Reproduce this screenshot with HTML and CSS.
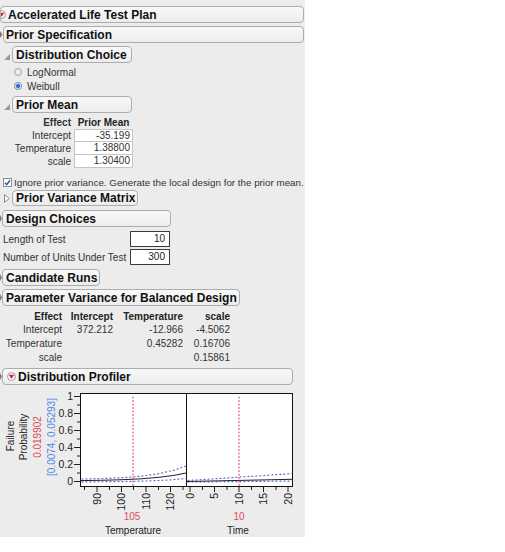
FILE: index.html
```html
<!DOCTYPE html>
<html>
<head>
<meta charset="utf-8">
<title>Accelerated Life Test Plan</title>
<link rel="stylesheet" href="styles.css">
</head>
<body>
<div class="panel">
  <div class="row first">
    <div class="box w-top">
      <svg class="hot cut" width="9" height="9" viewBox="0 0 9 9"><circle cx="4.5" cy="4.5" r="4" fill="#fafafa" stroke="#a0a0a0"/><path d="M1.6 2.8 L7.4 2.8 L4.5 6.8 Z" fill="#d7263a"/></svg>
      <span>Accelerated Life Test Plan</span>
    </div>
  </div>
  <div class="row">
    <svg class="sliver" width="3" height="17" viewBox="0 0 3 17"><path d="M0 5 L2.5 8.5 L0 12 Z" fill="#7a7a7a"/></svg>
    <div class="box w-prior"><span>Prior Specification</span></div>
  </div>
  <div class="row">
    <span class="tri"><svg width="6" height="6" viewBox="0 0 6 6"><path d="M6 0 L6 6 L0 6 Z" fill="#9a9a9a"/></svg></span>
    <div class="box w-dist"><span>Distribution Choice</span></div>
  </div>
  <div class="opt first-opt"><span class="radio"></span>LogNormal</div>
  <div class="opt"><span class="radio on"></span>Weibull</div>
  <div class="row">
    <span class="tri"><svg width="6" height="6" viewBox="0 0 6 6"><path d="M6 0 L6 6 L0 6 Z" fill="#9a9a9a"/></svg></span>
    <div class="box w-mean"><span>Prior Mean</span></div>
  </div>
  <div class="pm">
    <div class="pm-h lbl">Effect</div><div class="pm-h ctr">Prior Mean</div>
    <div class="lbl">Intercept</div><div class="val">-35.199</div>
    <div class="lbl">Temperature</div><div class="val">1.38800</div>
    <div class="lbl">scale</div><div class="val">1.30400</div>
  </div>
  <div class="check-row">
    <svg class="check" width="9" height="9" viewBox="0 0 9 9"><rect x="0.5" y="0.5" width="8" height="8" fill="#fdfdfd" stroke="#8e8e8e"/><path d="M2 4.8 L3.7 6.6 L7 2.2" fill="none" stroke="#2b56b8" stroke-width="1.5"/></svg>
    <span>Ignore prior variance. Generate the local design for the prior mean.</span>
  </div>
  <div class="row pvm">
    <span class="tri closed"><svg width="6" height="9" viewBox="0 0 6 9"><path d="M0.5 0.7 L5.3 4.5 L0.5 8.3 Z" fill="#ffffff" stroke="#8a8a8a"/></svg></span>
    <div class="box w-pvm"><span>Prior Variance Matrix</span></div>
  </div>
  <div class="row design">
    <svg class="sliver" width="2" height="17" viewBox="0 0 2 17"><path d="M0 5 L2 8.5 L0 12 Z" fill="#7a7a7a"/></svg>
    <div class="box w-design"><span>Design Choices</span></div>
  </div>
  <div class="fields">
    <div class="field"><span class="flabel">Length of Test</span><span class="input">10</span></div>
    <div class="field"><span class="flabel">Number of Units Under Test</span><span class="input">300</span></div>
  </div>
  <div class="row">
    <svg class="sliver" width="2" height="17" viewBox="0 0 2 17"><path d="M0 5 L2 8.5 L0 12 Z" fill="#7a7a7a"/></svg>
    <div class="box w-cand"><span>Candidate Runs</span></div>
  </div>
  <div class="row">
    <svg class="sliver" width="2" height="17" viewBox="0 0 2 17"><path d="M0 5 L2 8.5 L0 12 Z" fill="#7a7a7a"/></svg>
    <div class="box w-param"><span>Parameter Variance for Balanced Design</span></div>
  </div>
  <div class="pv">
    <div class="pv-h">Effect</div><div class="pv-h">Intercept</div><div class="pv-h">Temperature</div><div class="pv-h">scale</div>
    <div>Intercept</div><div>372.212</div><div>-12.966</div><div>-4.5062</div>
    <div>Temperature</div><div></div><div>0.45282</div><div>0.16706</div>
    <div>scale</div><div></div><div></div><div>0.15861</div>
  </div>
  <div class="row prof">
    <svg class="sliver" width="2" height="17" viewBox="0 0 2 17"><path d="M0 5 L2 8.5 L0 12 Z" fill="#7a7a7a"/></svg>
    <div class="box w-prof">
      <svg class="hot" width="9" height="9" viewBox="0 0 9 9"><circle cx="4.5" cy="4.5" r="4" fill="#fafafa" stroke="#a0a0a0"/><path d="M1.6 2.8 L7.4 2.8 L4.5 6.8 Z" fill="#d7263a"/></svg>
      <span>Distribution Profiler</span>
    </div>
  </div>
  <svg class="chart" width="305" height="151" viewBox="0 386 305 151">
    <g class="ytitle">
      <text x="14" y="436" transform="rotate(-90 14 436)" text-anchor="middle" fill="#222">Failure</text>
      <text x="26.5" y="437" transform="rotate(-90 26.5 437)" text-anchor="middle" fill="#222">Probability</text>
      <text x="40.5" y="437" transform="rotate(-90 40.5 437)" text-anchor="middle" fill="#e04a5e">0.019902</text>
      <text x="55" y="437" transform="rotate(-90 55 437)" text-anchor="middle" fill="#4f86e6">[0.0074, 0.05293]</text>
    </g>
    <rect x="80.5" y="393.5" width="212" height="93" fill="#ffffff" stroke="#111" stroke-width="1"/>
    <line x1="186.5" y1="393.5" x2="186.5" y2="486.5" stroke="#111" stroke-width="1"/>
    <g stroke="#222" stroke-width="1">
      <line x1="74" y1="481.5" x2="80" y2="481.5"/>
      <line x1="74" y1="464.5" x2="80" y2="464.5"/>
      <line x1="74" y1="447.5" x2="80" y2="447.5"/>
      <line x1="74" y1="430.5" x2="80" y2="430.5"/>
      <line x1="74" y1="413.5" x2="80" y2="413.5"/>
      <line x1="74" y1="396.5" x2="80" y2="396.5"/>
      <line x1="77" y1="473" x2="80" y2="473"/>
      <line x1="77" y1="456" x2="80" y2="456"/>
      <line x1="77" y1="439" x2="80" y2="439"/>
      <line x1="77" y1="422" x2="80" y2="422"/>
      <line x1="77" y1="405" x2="80" y2="405"/>
      <line x1="84.5" y1="487" x2="84.5" y2="490"/>
      <line x1="97" y1="487" x2="97" y2="492"/>
      <line x1="109.5" y1="487" x2="109.5" y2="490"/>
      <line x1="121.5" y1="487" x2="121.5" y2="492"/>
      <line x1="133.5" y1="487" x2="133.5" y2="490"/>
      <line x1="146" y1="487" x2="146" y2="492"/>
      <line x1="158.5" y1="487" x2="158.5" y2="490"/>
      <line x1="170.5" y1="487" x2="170.5" y2="492"/>
      <line x1="183" y1="487" x2="183" y2="490"/>
      <line x1="190" y1="487" x2="190" y2="492"/>
      <line x1="202.5" y1="487" x2="202.5" y2="490"/>
      <line x1="214.5" y1="487" x2="214.5" y2="492"/>
      <line x1="227" y1="487" x2="227" y2="490"/>
      <line x1="239" y1="487" x2="239" y2="492"/>
      <line x1="251.5" y1="487" x2="251.5" y2="490"/>
      <line x1="263.5" y1="487" x2="263.5" y2="492"/>
      <line x1="276" y1="487" x2="276" y2="490"/>
      <line x1="288" y1="487" x2="288" y2="492"/>
    </g>
    <g class="tick" text-anchor="end" fill="#222">
      <text x="73" y="485">0</text>
      <text x="73" y="468">0.2</text>
      <text x="73" y="451">0.4</text>
      <text x="73" y="434">0.6</text>
      <text x="73" y="417">0.8</text>
      <text x="73" y="400">1</text>
    </g>
    <g class="tick" text-anchor="end" fill="#222">
      <text x="100.5" y="493" transform="rotate(-90 100.5 493)">90</text>
      <text x="125" y="493" transform="rotate(-90 125 493)">100</text>
      <text x="149.5" y="493" transform="rotate(-90 149.5 493)">110</text>
      <text x="174" y="493" transform="rotate(-90 174 493)">120</text>
      <text x="193.5" y="493" transform="rotate(-90 193.5 493)">0</text>
      <text x="218" y="493" transform="rotate(-90 218 493)">5</text>
      <text x="242.5" y="493" transform="rotate(-90 242.5 493)">10</text>
      <text x="267" y="493" transform="rotate(-90 267 493)">15</text>
      <text x="291.5" y="493" transform="rotate(-90 291.5 493)">20</text>
    </g>
    <g fill="none" stroke-linecap="round">
      <path d="M82 479 L100 478.6 L120 477.8 L140 476.3 L160 473.5 L175 469.9 L186 466" stroke="#5567d6" stroke-width="1.2" stroke-dasharray="1 3"/>
      <path d="M82 481.9 L120 481.6 L150 480.9 L170 479.9 L186 478.5" stroke="#5567d6" stroke-width="1.2" stroke-dasharray="1 3"/>
      <path d="M81 480.6 L100 480.3 L120 479.8 L140 478.9 L160 477.2 L175 475.2 L186 473" stroke="#222" stroke-width="1"/>
      <path d="M188 480.5 L215 478.8 L240 477 L265 475.5 L292 473.5" stroke="#5567d6" stroke-width="1.2" stroke-dasharray="1 3"/>
      <path d="M188 482 L240 481.6 L292 481" stroke="#5567d6" stroke-width="1.2" stroke-dasharray="1 3"/>
      <path d="M187 481.5 L240 480.4 L292 479.3" stroke="#222" stroke-width="1"/>
      <path d="M133 397 L133 486" stroke="#ea4a60" stroke-width="1.2" stroke-dasharray="1 2.5"/>
      <path d="M239 397 L239 486" stroke="#ea4a60" stroke-width="1.2" stroke-dasharray="1 2.5"/>
    </g>
    <g class="xval" text-anchor="middle">
      <text x="132" y="520" fill="#e04a5e">105</text>
      <text x="239" y="520" fill="#e04a5e">10</text>
      <text x="133" y="534" fill="#222">Temperature</text>
      <text x="238" y="534" fill="#222">Time</text>
    </g>
  </svg>
</div>
</body>
</html>
```
FILE: styles.css
```css
body {
  margin: 0;
  background: #ffffff;
  font-family: "Liberation Sans", Arial, sans-serif;
  color: #222;
}

.panel {
  width: 305px;
  height: 537px;
  box-sizing: border-box;
  padding-top: 6px;
  background: #ececec;
  overflow: hidden;
  display: flex;
  flex-direction: column;
}

.row {
  display: flex;
  align-items: center;
  height: 17px;
  margin-top: 3px;
  flex: none;
}

.row.first { margin-top: 0; }

.box {
  box-sizing: border-box;
  height: 17px;
  border: 1px solid #adadad;
  border-radius: 4px;
  background: linear-gradient(#f9f9f9, #ececec);
  display: flex;
  align-items: center;
  padding-left: 3px;
  font-weight: bold;
  font-size: 12px;
  color: #111;
  white-space: nowrap;
  overflow: hidden;
}

.w-top { width: 304px; padding-left: 0; }
.w-prior { width: 301px; padding-left: 2px; }
.w-dist { width: 120px; }
.w-mean { width: 120px; }
.w-pvm { width: 126px; height: 16px; }
.w-design { width: 169px; padding-left: 3px; }
.w-cand { width: 98px; padding-left: 3px; }
.w-param { width: 238px; padding-left: 3px; }
.w-prof { width: 291px; padding-left: 4px; }

.hot { flex: none; margin-right: 2px; }
.hot.cut { margin-left: -4px; margin-right: 2px; }

.sliver { flex: none; }

.tri {
  width: 12px;
  flex: none;
  box-sizing: border-box;
  padding-left: 4px;
  display: flex;
  align-items: flex-end;
  height: 10px;
}

.tri.closed { align-items: center; }

.opt {
  height: 14px;
  display: flex;
  align-items: center;
  padding-left: 14px;
  font-size: 10px;
  color: #333;
  flex: none;
}

.first-opt { margin-top: 2px; }

.radio {
  width: 8px;
  height: 8px;
  box-sizing: border-box;
  border-radius: 50%;
  border: 1px solid #a2a2a2;
  background: radial-gradient(circle, #f4f4f4 0, #dcdcdc 100%);
  margin-right: 5px;
  flex: none;
}

.radio.on {
  border-color: #6d8fb8;
  background: radial-gradient(circle, #2f6fc8 0, #2f6fc8 1.6px, #e4ecf5 2.4px, #e4ecf5 100%);
}

.pm {
  display: grid;
  grid-template-columns: 74px 59px;
  grid-auto-rows: 13px;
  margin-top: 3px;
  font-size: 10px;
  line-height: 13px;
  flex: none;
}

.pm-h { font-weight: bold; color: #222; }
.pm .lbl { text-align: right; padding-right: 3px; color: #333; }
.pm .ctr { text-align: center; }

.pm .val {
  box-sizing: border-box;
  background: #ffffff;
  border: 1px solid #c4c4c4;
  text-align: right;
  padding-right: 2px;
  line-height: 11px;
  color: #333;
}

.pm .val + .lbl + .val { border-top: none; line-height: 12px; }

.check-row {
  height: 14px;
  margin-top: 7px;
  padding-left: 3px;
  display: flex;
  align-items: center;
  font-size: 9.8px;
  color: #333;
  white-space: nowrap;
  flex: none;
}

.check { flex: none; margin-right: 2px; }

.row.pvm { height: 16px; margin-top: 1px; }
.row.design { margin-top: 4px; }

.fields { margin-top: 3px; flex: none; }

.field {
  height: 18px;
  display: flex;
  align-items: center;
  font-size: 10px;
  color: #333;
}

.flabel {
  width: 130px;
  box-sizing: border-box;
  padding-left: 3px;
  white-space: nowrap;
}

.input {
  width: 40px;
  height: 16px;
  box-sizing: border-box;
  border: 1px solid #3a3a3a;
  background: #ffffff;
  text-align: right;
  padding-right: 4px;
  line-height: 14px;
  font-size: 10px;
  color: #222;
}

.pv {
  display: grid;
  grid-template-columns: 62px 51px 70px 47px;
  grid-template-rows: 13px 14px 14px 14px;
  margin-top: 4px;
  font-size: 10px;
  line-height: 14px;
  color: #333;
  text-align: right;
  flex: none;
}

.pv-h { font-weight: bold; color: #222; line-height: 13px; }

.row.prof { margin-top: 3px; }

.chart {
  display: block;
  margin-top: 1px;
  flex: none;
  font-family: "Liberation Sans", Arial, sans-serif;
}

.chart .tick text { font-size: 10.5px; }
.chart .ytitle text { font-size: 10px; }
.chart .xval text { font-size: 10px; }
```
